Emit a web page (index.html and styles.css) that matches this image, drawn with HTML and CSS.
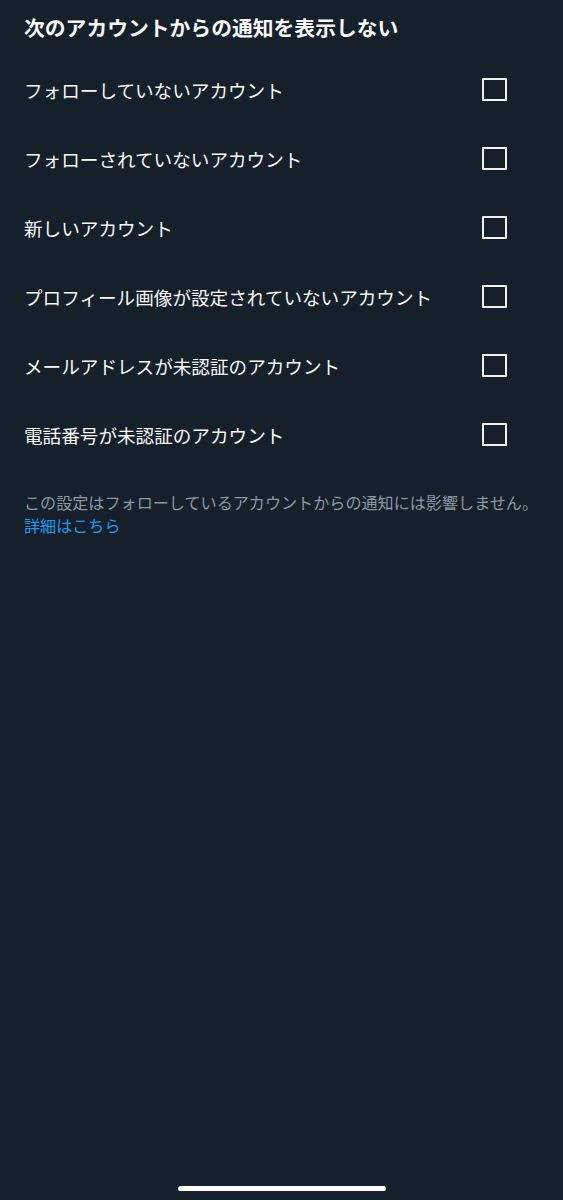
FILE: index.html
```html
<!DOCTYPE html>
<html lang="ja">
<head>
<meta charset="utf-8">
<link rel="stylesheet" href="styles.css">
</head>
<body>
<div class="screen">
  <h1 class="title">次のアカウントからの通知を表示しない</h1>
  <ul class="list">
    <li class="row"><span class="label">フォローしていないアカウント</span><span class="box"></span></li>
    <li class="row"><span class="label">フォローされていないアカウント</span><span class="box"></span></li>
    <li class="row"><span class="label">新しいアカウント</span><span class="box"></span></li>
    <li class="row"><span class="label">プロフィール画像が設定されていないアカウント</span><span class="box"></span></li>
    <li class="row"><span class="label">メールアドレスが未認証のアカウント</span><span class="box"></span></li>
    <li class="row"><span class="label">電話番号が未認証のアカウント</span><span class="box"></span></li>
  </ul>
  <p class="note">この設定はフォローしているアカウントからの通知には影響しません。<br><a class="link" href="#">詳細はこちら</a></p>
  <div class="spacer"></div>
  <div class="home-bar"><span class="indicator"></span></div>
</div>
</body>
</html>
```

FILE: styles.css
```css
html, body {
  margin: 0;
  padding: 0;
  background: #15202b;
}
body {
  font-family: "Noto Sans CJK JP", "Noto Sans", sans-serif;
  color: #f7f9f9;
}
.screen {
  height: 1200px;
  display: flex;
  flex-direction: column;
  background: #15202b;
}
.title {
  margin: 13px 0 0 24px;
  font-size: 20.8px;
  line-height: 28px;
  font-weight: 700;
  letter-spacing: 0;
}
.list {
  list-style: none;
  margin: 14px 0 0 0;
  padding: 0;
}
.row {
  height: 69px;
  display: flex;
  align-items: center;
  justify-content: space-between;
  padding: 0 56px 0 24px;
}
.label {
  font-size: 18.6px;
  line-height: 26px;
  font-weight: 400;
}
.box {
  width: 21px;
  height: 19px;
  border: 2px solid #eef1f2;
  border-radius: 1px;
  margin-top: -1px;
}
.note {
  margin: 22px 24px 0 24px;
  font-size: 16.1px;
  line-height: 23px;
  color: #8b98a5;
  white-space: nowrap;
}
.link {
  color: #1d9bf0;
  text-decoration: none;
}
.spacer {
  flex: 1;
}
.home-bar {
  height: 14px;
  display: flex;
  justify-content: center;
  align-items: flex-start;
}
.indicator {
  width: 208px;
  height: 5px;
  border-radius: 3px;
  background: #ffffff;
}
```
